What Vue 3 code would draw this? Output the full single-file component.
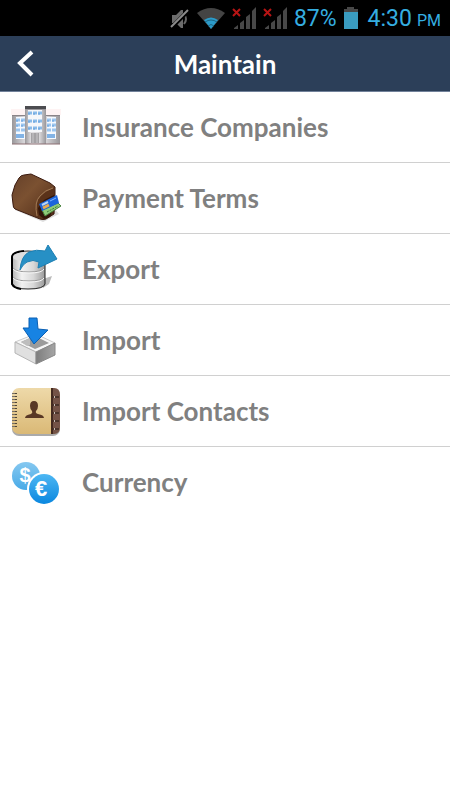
<template>
  <div class="screen">
    <div class="status-bar">
      <svg class="status-icon" width="21" height="24" viewBox="0 0 21 24" aria-hidden="true">
        <path d="M3 9h4l5-5h2v18h-2l-5-5H3z" fill="#6c6c6c" />
        <path d="M15 8q4 5 0 10" fill="none" stroke="#666" stroke-width="2" />
        <path d="M2 22L19 5" stroke="#000" stroke-width="4" />
        <path d="M2 21L19 4" stroke="#8c8c8c" stroke-width="2" />
      </svg>
      <svg class="status-icon" width="30" height="24" viewBox="0 0 30 24" aria-hidden="true">
        <path d="M1 7Q15-3 29 7L15 23z" fill="#444" />
        <path d="M8 14Q15 9 22 14L15 23z" fill="#2b9bc9" />
        <path d="M9 16Q15 12 21 16M12 20Q15 17 18 20" fill="none" stroke="#1c6583" />
      </svg>
      <svg v-for="n in 2" :key="n" class="status-icon" width="25" height="24" viewBox="0 0 25 24" aria-hidden="true">
        <path d="M2 23v-1l4-3v4zM8 17l4-3v9H8zM14 11l4-3v15h-4zM20 5l4-4v22h-4z" fill="#484848" />
        <path d="M1 3l7 7M8 3l-7 7" stroke="#b81414" stroke-width="2" />
      </svg>
      <span class="battery-level">87%</span>
      <svg class="status-icon" width="16" height="24" viewBox="0 0 16 24" aria-hidden="true">
        <path d="M1 6V3h3V1h7v2h4v3z" fill="#484848" />
        <path d="M1 6h14v17H1z" fill="#3a9cc0" />
      </svg>
      <span class="clock">4:30<small>PM</small></span>
    </div>

    <header class="header">
      <button class="back" type="button" aria-label="Back">
        <svg width="18" height="28" viewBox="0 0 18 28" aria-hidden="true">
          <path d="M16 2L4 13L16 25" fill="none" stroke="#fff" stroke-width="4" />
        </svg>
      </button>
      <h1>Maintain</h1>
    </header>

    <ul class="menu">
      <li v-for="item in items" :key="item.icon">
        <button class="menu-item" type="button">
          <svg class="menu-icon" viewBox="10 8 52 54" aria-hidden="true">
            <template v-if="item.icon === 'buildings'">
              <path d="M11 17h50v6H11z" fill="#fef3f3" />
              <path d="M12 23h14v29H12zM46 23h14v29H46z" fill="url(#wall)" />
              <path d="M12 23h14v1H12zM46 23h14v1H46z" fill="#8a8488" />
              <path d="M16 25h9v22h-9zM47 25h9v22h-9z" fill="#f5f9ff" />
              <path d="M25 15h21v37H25z" fill="url(#wall)" />
              <path d="M25 14h21v3H25z" fill="#4c4c50" />
              <path d="M25 17h21v1H25z" fill="#98969a" />
              <path d="M28 18h14v22H28z" fill="#f6f7fa" />
              <path
                d="M16 28h9M16 33h9M16 38h9M47 28h9M47 33h9M47 38h9"
                stroke="#9cc5ee"
                stroke-width="3"
                stroke-dasharray="4 1"
              />
              <path d="M16 42h8v4h-8zM47 42h8v4h-8z" fill="#82b3e6" />
              <path
                d="M28 21h14M28 29h14M28 36h14"
                stroke="#8abbe9"
                stroke-width="3"
                stroke-dasharray="4 1"
              />
              <path
                d="M28 22h14M28 30h14M28 37h14M16 29h9M16 34h9M47 29h9M47 34h9"
                stroke="#5f9cdb"
                stroke-dasharray="2 3"
              />
              <path d="M31 41h8v10h-8z" fill="#a4a2a5" />
              <path d="M33 41v10M37 41v10" stroke="#c9c7ca" />
              <path d="M25 52h21M12 52h13M46 52h14" stroke="#8c6e72" />
            </template>

            <template v-else-if="item.icon === 'wallet'">
              <path d="M15 47l28 12 16-8-5-6z" fill="#ddd" />
              <path
                d="M12 32l3-10 4-7q2-3 5-3l7-1 19 9 5 4v9l-1 18-8 5q-3 1-6 0L15 46q-2-1-2-5z"
                fill="url(#leather)"
                stroke="#3b1a0f"
              />
              <path d="M38 54q-4-14 3-21 5-5 13-8v8l-10 7v16z" fill="#5a3219" />
              <path d="M37 53q-3-14 3-20 5-6 13-8" fill="none" stroke="#a17a55" />
              <path d="M38 45l6-8 10-5v9l-4 13-6 2-5-4z" fill="#331609" />
              <path d="M42 47l16-7 3 3-16 10z" fill="#8fcb78" stroke="#4b8341" />
              <path d="M39 41l18-9 2 8-17 8z" fill="#1c64dc" />
              <path d="M42 42l6-3" stroke="#b9d4f5" stroke-width="2" />
              <path d="M43 45l6-3" stroke="#eba94e" stroke-width="3" />
              <path d="M50 38l6-3" stroke="#80b6ff" />
              <path d="M47 49l11-6" stroke="#39793a" stroke-dasharray="2 1" />
            </template>

            <template v-else-if="item.icon === 'export'">
              <path d="M43 45l9-3-3 8-6 4z" fill="#bbb" />
              <path
                d="M12 23q0-6 16-6t17 6v27q-1 5-17 5t-16-5z"
                fill="url(#silver)"
                stroke="#222"
              />
              <path d="M24 17q-12 1-12 6v27q2 4 9 5" fill="none" stroke="#000" stroke-width="2" />
              <ellipse cx="28" cy="23" rx="15" ry="5" fill="#dedede" />
              <path d="M13 34q3 4 16 4t15-4M13 43q3 4 16 4t15-4" fill="none" stroke="#999" />
              <path d="M13 35q3 4 16 4t15-4M13 44q3 4 16 4t15-4" fill="none" stroke="#f7f7f7" />
              <path
                d="M20 36Q21 22 29 18Q36 15 45 17L48 11L57 25L38 34L39 28Q33 25 27 28Q23 30 20 36z"
                fill="#2790c5"
                stroke="#1d7fb3"
              />
            </template>

            <template v-else-if="item.icon === 'import'">
              <path d="M15 37L30 31h10l15 7-19 9z" fill="#f6f6f6" stroke="#ccc" />
              <path d="M21 37l9-4h9l10 5-14 6z" fill="#9b9b9b" />
              <path d="M21 37l9-4v7l-3 1z" fill="#bdbdbd" />
              <path d="M15 37l21 10v12L15 48z" fill="#e0e0e0" stroke="#b5b5b5" />
              <path d="M36 47l19-9v12l-19 9z" fill="url(#boxside)" stroke="#888" />
              <path d="M29 13h8l1 11 10 1-14 14-11-16h6z" fill="#1783e3" stroke="#0b60b4" />
            </template>

            <template v-else-if="item.icon === 'contacts'">
              <rect x="12" y="13" width="48" height="47" rx="7" fill="#aaa" />
              <rect x="12" y="12" width="48" height="46" rx="7" fill="url(#paper)" />
              <path d="M51 12h3q6 0 6 7v32q0 7-6 7h-3z" fill="#745347" />
              <path d="M52 12v46" stroke="#432a20" stroke-width="2" />
              <path
                d="M53 21h6M53 29h6M53 37h6M53 45h6M53 53h6"
                stroke="#4a342b"
                stroke-width="2"
              />
              <path d="M54 21h1M54 29h1M54 37h1M54 45h1M54 53h1" stroke="#c8bdb6" stroke-width="2" />
              <path d="M14 17v36" stroke="#777067" stroke-width="4" stroke-dasharray="1 2" />
              <path d="M16 17v36" stroke="#4d4437" stroke-width="2" stroke-dasharray="1 2" />
              <path
                d="M25 42q0-3 6-4 2-1 1-3-2-2-2-5 0-5 4-5t4 5q0 3-2 5-1 2 2 3 6 1 6 4z"
                fill="#593825"
              />
            </template>

            <template v-else>
              <circle cx="26" cy="29" r="14" fill="url(#lightcoin)" />
              <text class="coin-text" x="25" y="35" text-anchor="middle">$</text>
              <circle cx="44" cy="42" r="17" fill="#fff" />
              <circle cx="44" cy="42" r="15" fill="url(#coin)" />
              <text class="coin-text euro" x="41" y="49" text-anchor="middle">€</text>
            </template>
          </svg>
          <span>{{ item.label }}</span>
        </button>
      </li>
    </ul>

    <svg class="gradients" width="0" height="0" aria-hidden="true">
      <defs>
        <linearGradient id="wall">
          <stop offset="0" stop-color="#99979a" />
          <stop offset=".3" stop-color="#e3e1e4" />
          <stop offset=".7" stop-color="#d8d6d9" />
          <stop offset="1" stop-color="#99979a" />
        </linearGradient>
        <linearGradient id="leather" x2="1" y2="1">
          <stop offset="0" stop-color="#65402a" />
          <stop offset=".4" stop-color="#7b5131" />
          <stop offset="1" stop-color="#4d2915" />
        </linearGradient>
        <linearGradient id="silver">
          <stop offset="0" stop-color="#b5b5b5" />
          <stop offset=".3" stop-color="#f2f2f2" />
          <stop offset=".65" stop-color="#d8d8d8" />
          <stop offset="1" stop-color="#999" />
        </linearGradient>
        <linearGradient id="boxside">
          <stop offset="0" stop-color="#7d7d7d" />
          <stop offset="1" stop-color="#a5a5a5" />
        </linearGradient>
        <linearGradient id="paper" x2="0" y2="1">
          <stop offset="0" stop-color="#eed9a9" />
          <stop offset="1" stop-color="#dab976" />
        </linearGradient>
        <linearGradient id="lightcoin" x2="0" y2="1">
          <stop offset="0" stop-color="#86c8f0" />
          <stop offset="1" stop-color="#48aae7" />
        </linearGradient>
        <linearGradient id="coin" x2="0" y2="1">
          <stop offset="0" stop-color="#4db7f3" />
          <stop offset="1" stop-color="#0a87df" />
        </linearGradient>
      </defs>
    </svg>
  </div>
</template>

<script setup>
const items = [
  { icon: 'buildings', label: 'Insurance Companies' },
  { icon: 'wallet', label: 'Payment Terms' },
  { icon: 'export', label: 'Export' },
  { icon: 'import', label: 'Import' },
  { icon: 'contacts', label: 'Import Contacts' },
  { icon: 'currency', label: 'Currency' }
]
</script>

<style>
body {
  margin: 0;
  background: #fff;
}
</style>

<style scoped>
.screen {
  min-height: 100vh;
  background: #fff;
  font-family: Lato, "Liberation Sans", sans-serif;
}

.status-bar {
  display: flex;
  align-items: center;
  justify-content: flex-end;
  gap: 6px;
  height: 36px;
  padding: 0 9px;
  background: #000;
  color: #35aee0;
  font-family: Roboto, sans-serif;
  font-size: 23px;
  white-space: nowrap;
}

.status-icon {
  flex: none;
}

.clock {
  margin-left: 3px;
}

.clock small {
  margin-left: 5px;
  font-size: 16px;
}

.header {
  display: grid;
  grid-template-columns: 56px 1fr 56px;
  align-items: center;
  height: 55px;
  background: #2c3f59;
  border-bottom: 1px solid #71819a;
}

.header h1 {
  margin: 0;
  color: #fff;
  font-size: 26px;
  font-weight: 700;
  line-height: 32px;
  text-align: center;
}

button {
  border: 0;
  background: none;
  font-family: inherit;
  cursor: pointer;
}

.back {
  display: flex;
  padding: 12px 16px;
}

.menu {
  margin: 0;
  padding: 0;
  list-style: none;
}

.menu li + li {
  border-top: 1px solid #d0d0d0;
}

.menu-item {
  display: flex;
  align-items: center;
  gap: 20px;
  width: 100%;
  padding: 8px 10px;
  color: #808080;
  font-size: 26px;
  font-weight: 700;
  line-height: 32px;
  text-align: left;
}

.menu-icon {
  flex: none;
  width: 52px;
  height: 54px;
}

.coin-text {
  fill: #fff;
  font-family: "Liberation Sans", sans-serif;
  font-size: 20px;
  font-weight: 700;
}

.euro {
  font-size: 22px;
}

.gradients {
  display: block;
}
</style>
